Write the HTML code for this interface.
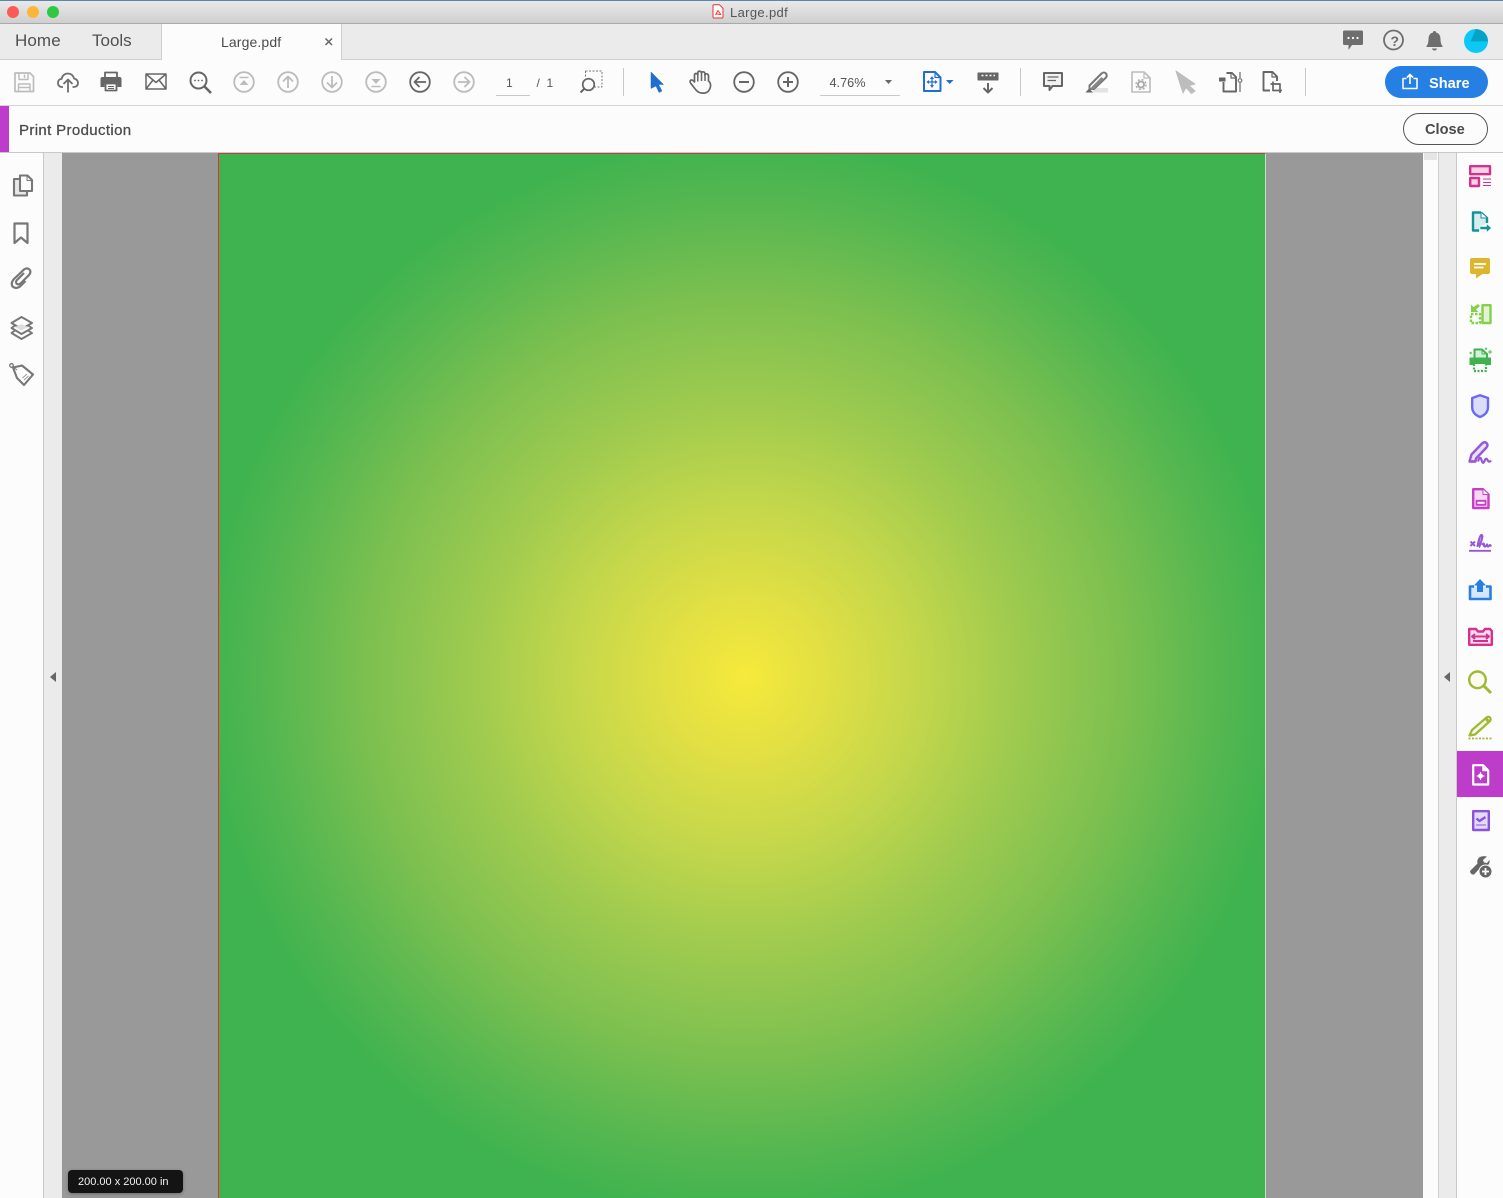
<!DOCTYPE html>
<html><head><meta charset="utf-8">
<style>
html,body{margin:0;padding:0;width:1503px;height:1198px;overflow:hidden;background:#fcfcfc;font-family:"Liberation Sans",sans-serif;}
.a{position:absolute}
svg{position:absolute;overflow:visible;fill:none;stroke-linejoin:round;filter:blur(.25px)}
.t{position:absolute;white-space:nowrap}
</style></head><body>
<!-- title bar -->
<div class="a" style="left:0;top:0;width:1503px;height:1px;background:#5b87a8"></div>
<div class="a" style="left:0;top:1px;width:1503px;height:22px;background:linear-gradient(#e9e9e9,#cfcfcf);border-bottom:1px solid #a9a9a9"></div>
<div class="a" style="left:7px;top:6px;width:12px;height:12px;border-radius:50%;background:#fb5b57"></div>
<div class="a" style="left:27px;top:6px;width:12px;height:12px;border-radius:50%;background:#fdb63a"></div>
<div class="a" style="left:47px;top:6px;width:12px;height:12px;border-radius:50%;background:#2fc844"></div>
<svg style="left:712px;top:4px" width="12" height="15"><path d="M1 1.500Q1 .8 1.700 .8H7.500L11 4.300V13Q11 14 10 14H2Q1 14 1 13Z" stroke="#ee2f2f" fill="#fff"/><path d="M3.500 11 6 6.500 8.800 10.500 3.500 9.800" stroke="#ee2f2f" stroke-width=".9"/></svg>
<div class="t" style="left:730px;top:5px;font-size:13px;color:#555;letter-spacing:.35px">Large.pdf</div>
<!-- tab row -->
<div class="a" style="left:0;top:24px;width:1503px;height:35px;background:#ebebeb;border-bottom:1px solid #cfcfcf"></div>
<div class="a" style="left:161px;top:24px;width:181px;height:36px;background:#fcfcfc;border-left:1px solid #cfcfcf;border-right:1px solid #cfcfcf;box-sizing:border-box"></div>
<div class="t" style="left:15px;top:31px;font-size:17px;color:#505050;letter-spacing:.1px">Home</div>
<div class="t" style="left:92px;top:31px;font-size:17px;color:#505050">Tools</div>
<div class="t" style="left:221px;top:34px;font-size:14px;color:#4b4b4b;letter-spacing:.12px">Large.pdf</div>
<svg style="left:325px;top:38px" width="8" height="8"><path d="M.5 .5 7 7M7 .5 .5 7" stroke="#666" stroke-width="1.500"/></svg>
<!-- tab right icons -->
<svg style="left:1342px;top:30px" width="22" height="22"><path d="M2.500 .5H19.500Q21 .5 21 2V13.500Q21 15 19.500 15H10L6.500 20V15H2.500Q1 15 1 13.500V2Q1 .5 2.500 .5Z" fill="#6e6e6e"/><circle cx="6.500" cy="8" r="1.100" fill="#fff"/><circle cx="11" cy="8" r="1.100" fill="#fff"/><circle cx="15.500" cy="8" r="1.100" fill="#fff"/></svg>
<svg style="left:1383px;top:29px" width="22" height="22"><circle cx="10.500" cy="11" r="9.500" stroke="#6e6e6e" stroke-width="1.800"/></svg>
<div class="t" style="left:1390.500px;top:33px;font-size:14px;font-weight:bold;color:#6e6e6e">?</div>
<svg style="left:1426px;top:30px" width="18" height="21"><path d="M8.500 1Q10 1 10 2.500Q14.500 3.500 14.500 9Q14.500 14 16.500 16V17H.5V16Q2.500 14 2.500 9Q2.500 3.500 7 2.500Q7 1 8.500 1Z" fill="#6e6e6e"/><path d="M6 18.500H11Q10.500 20.500 8.500 20.500T6 18.500Z" fill="#6e6e6e"/></svg>
<div class="a" style="left:1464px;top:29px;width:24px;height:24px;border-radius:50%;background:#0cc8f7"></div>
<svg style="left:1464px;top:29px" width="24" height="24"><path d="M12 0 6.500 12.500H24Q23.500 2 12 0Z" fill="#07a3c6"/></svg>
<!-- toolbar -->
<div class="a" style="left:0;top:60px;width:1503px;height:45px;background:#fcfcfc;border-bottom:1px solid #d4d4d4"></div>
<svg style="left:14px;top:72px" width="20" height="20"><path d="M1 1H16L19.500 4.500V19.500H1Z" stroke="#bcbcbc" stroke-width="1.700"/><path d="M5 1V7.500H14V1M10.500 2.500V6M4.500 19V12H16V19M4.500 15.500H16" stroke="#bcbcbc" stroke-width="1.400"/></svg>
<svg style="left:57px;top:71px" width="22" height="22"><path d="M6 16H4.500Q.8 15.500 1 11.500Q1.300 8 4.500 8Q6 2.500 11 2.500Q16 2.800 17 7.500Q21 8.500 21 12Q21 15.500 17 16H15.500" stroke="#6e6e6e" stroke-width="1.800"/><path d="M11 21.500V9M6.500 13 11 8.500 15.500 13" stroke="#6e6e6e" stroke-width="1.800"/></svg>
<svg style="left:100px;top:71px" width="22" height="21"><path d="M5 7V1.500H17V7" stroke="#666" stroke-width="1.800"/><path d="M2.500 6H19.500Q21.500 6 21.500 8V16H17.500V12.500H4.500V16H.5V8Q.5 6 2.500 6Z" fill="#666"/><path d="M5.500 12.500H16.500V19.500H5.500Z" stroke="#666" stroke-width="1.800"/><path d="M8 15.500H14M8 17.500H14" stroke="#666"/></svg>
<svg style="left:145px;top:73px" width="22" height="17"><path d="M1 1H21V16H1ZM1 1 11 9.500 21 1M1 16 8 7M21 16 14 7" stroke="#666" stroke-width="1.500"/></svg>
<svg style="left:189px;top:71px" width="24" height="24"><circle cx="9.500" cy="9.500" r="8" stroke="#666" stroke-width="2"/><path d="M15 15 22 22" stroke="#666" stroke-width="2.600"/><circle cx="6" cy="9.500" r=".9" fill="#666"/><circle cx="9.500" cy="9.500" r=".9" fill="#666"/><circle cx="13" cy="9.500" r=".9" fill="#666"/></svg>
<svg style="left:233px;top:71px" width="22" height="22"><circle cx="11" cy="11" r="9.800" stroke="#bcbcbc" stroke-width="1.800"/><path d="M6.500 6.500H15.500" stroke="#bcbcbc" stroke-width="1.500"/><path d="M11 9 15.500 14H6.500Z" fill="#bcbcbc"/></svg>
<svg style="left:277px;top:71px" width="22" height="22"><circle cx="11" cy="11" r="9.800" stroke="#bcbcbc" stroke-width="1.800"/><path d="M11 17V5.500M6 10.500 11 5.500 16 10.500" stroke="#bcbcbc" stroke-width="1.800"/></svg>
<svg style="left:321px;top:71px" width="22" height="22"><circle cx="11" cy="11" r="9.800" stroke="#bcbcbc" stroke-width="1.800"/><path d="M11 5V16.500M6 11.500 11 16.500 16 11.500" stroke="#bcbcbc" stroke-width="1.800"/></svg>
<svg style="left:365px;top:71px" width="22" height="22"><circle cx="11" cy="11" r="9.800" stroke="#bcbcbc" stroke-width="1.800"/><path d="M6.500 15.500H15.500" stroke="#bcbcbc" stroke-width="1.500"/><path d="M11 13 15.500 8H6.500Z" fill="#bcbcbc"/></svg>
<svg style="left:409px;top:71px" width="22" height="22"><circle cx="11" cy="11" r="9.800" stroke="#666" stroke-width="1.800"/><path d="M17 11H5.500M10.500 6 5.500 11 10.500 16" stroke="#666" stroke-width="1.800"/></svg>
<svg style="left:453px;top:71px" width="22" height="22"><circle cx="11" cy="11" r="9.800" stroke="#bcbcbc" stroke-width="1.800"/><path d="M5 11H16.500M11.500 6 16.500 11 11.500 16" stroke="#bcbcbc" stroke-width="1.800"/></svg>
<div class="t" style="left:506px;top:76px;font-size:12px;color:#555">1</div>
<div class="a" style="left:496px;top:95px;width:34px;height:1px;background:#c8c8c8"></div>
<div class="t" style="left:536.500px;top:76px;font-size:12px;color:#555">/&nbsp;&nbsp;1</div>
<svg style="left:579px;top:70px" width="24" height="24"><path d="M6.500 1H23V17H12" stroke="#777" stroke-dasharray="2 1.500"/><path d="M6.500 1V8" stroke="#777" stroke-dasharray="2 1.500"/><circle cx="9.500" cy="14.500" r="5.800" stroke="#666" stroke-width="1.700" fill="#fcfcfc"/><path d="M5 19 1.500 22.500" stroke="#666" stroke-width="2"/></svg>
<div class="a" style="left:623px;top:68px;width:1px;height:28px;background:#c8c8c8"></div>
<svg style="left:650px;top:71px" width="15" height="22"><path d="M1 1 13.500 13.500H8.500L12 20 9 21.500 6 15 1 17.500Z" fill="#1f6fd0" stroke="#1f6fd0" stroke-width=".5"/></svg>
<svg style="left:689px;top:70px" width="23" height="24"><path d="M7 20 1.500 13Q.5 11 2 10Q3.500 9.500 5.500 12V5Q5.500 3.500 7 3.500T8.800 5V3Q8.800 1.200 10.500 1.200T12.500 3V3Q12.500 1.800 14 1.800T16 3.500V5Q16 3.800 17.500 3.800T19.500 5.500V11Q22 13 21.500 16.500Q20.500 22 16 23Q10 23.800 7 20Z" stroke="#666" stroke-width="1.700"/><path d="M8.800 4V11.500M12.500 3V11M16 4V11" stroke="#666" stroke-width="1.500"/></svg>
<svg style="left:733px;top:71px" width="22" height="22"><circle cx="11" cy="11" r="9.800" stroke="#666" stroke-width="1.800"/><path d="M6 11H16" stroke="#666" stroke-width="2"/></svg>
<svg style="left:777px;top:71px" width="22" height="22"><circle cx="11" cy="11" r="9.800" stroke="#666" stroke-width="1.800"/><path d="M6 11H16M11 6V16" stroke="#666" stroke-width="2"/></svg>
<div class="t" style="left:829.500px;top:76px;font-size:12.700px;color:#555">4.76%</div>
<div class="a" style="left:820px;top:95px;width:80px;height:1px;background:#c8c8c8"></div>
<svg style="left:885px;top:80px" width="8" height="5"><path d="M0 0H7L3.500 4Z" fill="#666"/></svg>
<svg style="left:923px;top:71px" width="19" height="21"><path d="M1 1H12L17.500 6.500V20H1Z" stroke="#1f6fd0" stroke-width="2"/><path d="M12 1V6.500H17.500" stroke="#1f6fd0" stroke-width="1.200"/><path d="M9 6V16M4 11H14" stroke="#1f6fd0" stroke-width="1.200"/><path d="M9 5 11 8H7ZM9 17 7 14H11ZM3.500 11 6 9V13ZM14.500 11 12 9V13Z" fill="#1f6fd0"/></svg>
<svg style="left:946px;top:80px" width="8" height="5"><path d="M0 0H7.500L3.700 4Z" fill="#1f6fd0"/></svg>
<svg style="left:977px;top:72px" width="22" height="22"><path d="M1 1H21V8H1Z" fill="#666" stroke="#666"/><path d="M4.500 3.500H6.500M8.500 3.500H10.500M12.500 3.500H14.500M16.500 3.500H18" stroke="#fff" stroke-width="1.500"/><path d="M11 11V20.500M6.500 16 11 20.500 15.500 16" stroke="#666" stroke-width="2"/></svg>
<div class="a" style="left:1020px;top:68px;width:1px;height:28px;background:#c8c8c8"></div>
<svg style="left:1043px;top:72px" width="20" height="21"><path d="M1 1H19V14H9.500L6.500 18V14H1Z" stroke="#666" stroke-width="2" fill="#f2f2f2"/><path d="M4.500 5H15.500M4.500 8.500H13" stroke="#666" stroke-width="1.200"/></svg>
<svg style="left:1085px;top:71px" width="24" height="22"><path d="M7 21.500H23V17H10Z" fill="#e3e3e3"/><path d="M.5 21.500 4 17.500 8 21.500Z" fill="#666"/><path d="M4.500 14.500 16.500 2.500Q19 .5 21 2.500Q22.500 4.500 21 6.500L9 18 4.500 18Z" stroke="#777" stroke-width="2"/><path d="M5 18 7.500 15 16.500 6 18.500 8 9 18Z" fill="#888"/></svg>
<svg style="left:1131px;top:71px" width="20" height="22"><path d="M1 1H13L19 7V21H1Z" stroke="#bcbcbc" stroke-width="1.600"/><path d="M13 1V7H19" stroke="#bcbcbc" stroke-width="1.200"/><circle cx="10" cy="13.500" r="3" stroke="#aaa" stroke-width="2"/><circle cx="10" cy="13.500" r="5" stroke="#aaa" stroke-dasharray="2 2" stroke-width="1.300"/></svg>
<svg style="left:1175px;top:70px" width="22" height="25"><path d="M1 1 20 14 14 15.500 20 21 16.500 23.500 11 17.500 8 23Z" fill="#bdbdbd" stroke="#bdbdbd"/></svg>
<svg style="left:1218px;top:71px" width="24" height="22"><path d="M8.500 2H14L18 6V20.500H5.500V11" stroke="#666" stroke-width="1.900"/><path d="M1 6.500H7.500V10.500H1Z" fill="#666"/><path d="M13 2V7H18" stroke="#666" stroke-width="1.200"/><path d="M22 1V7M22 12V21" stroke="#888" stroke-width="1.500"/><circle cx="22" cy="9.500" r="1.800" stroke="#777" stroke-width="1.200"/></svg>
<svg style="left:1262px;top:71px" width="23" height="24"><path d="M8 19.500H1.500V1H10.500L15 5.500V10" stroke="#666" stroke-width="1.900"/><path d="M10 1V6H15" stroke="#666" stroke-width="1.200"/><path d="M11 10.500V19.500H20M8.500 13H18V22" stroke="#666" stroke-width="1.700"/></svg>
<div class="a" style="left:1305px;top:68px;width:1px;height:28px;background:#c8c8c8"></div>
<div class="a" style="left:1385px;top:66px;width:103px;height:32px;border-radius:16px;background:#2680e3"></div>
<svg style="left:1402px;top:73px" width="16" height="17"><path d="M4.500 5.500H1V15.500H15V5.500H11.500" stroke="#fff" stroke-width="1.500"/><path d="M8 11V1.500M5 4.500 8 1.500 11 4.500" stroke="#fff" stroke-width="1.600"/></svg>
<div class="t" style="left:1429px;top:76px;font-size:14.600px;font-weight:bold;color:#fff">Share</div>
<!-- Print production bar -->
<div class="a" style="left:0;top:106px;width:1503px;height:46px;background:#fcfcfc;border-bottom:1px solid #c9c9c9"></div>
<div class="a" style="left:0;top:106px;width:9px;height:46px;background:#bd3cc9"></div>
<div class="t" style="left:19px;top:121.500px;font-size:15px;color:#4b4b4b;letter-spacing:.36px;-webkit-text-stroke:.25px #4b4b4b">Print Production</div>
<div class="a" style="left:1403px;top:113px;width:85px;height:32px;border:1px solid #555;border-radius:16px;box-sizing:border-box;background:#fcfcfc"></div>
<div class="t" style="left:1425px;top:122px;font-size:14.600px;font-weight:bold;color:#4b4b4b">Close</div>
<!-- main -->
<div class="a" style="left:0;top:153px;width:43px;height:1045px;background:#fcfcfc;border-right:1px solid #c9c9c9"></div>
<div class="a" style="left:44px;top:153px;width:18px;height:1045px;background:#ebebeb"></div>
<svg style="left:50px;top:672px" width="6" height="10"><path d="M6 0V10L0 5Z" fill="#666"/></svg>
<div class="a" style="left:62px;top:153px;width:1361px;height:1045px;background:#999"></div>
<!-- page -->
<div class="a" style="left:218px;top:153px;width:1048px;height:1045px;box-sizing:border-box;border-left:1.500px solid #ee2a2f;border-right:1.500px solid #c8e0c8;border-top:1px solid #c2403f;background:radial-gradient(circle 538px at 526px 523px,#f6ea3b 0%,#e3e043 14%,#c4d74b 32%,#a0cb4f 50%,#7dc050 70%,#56b750 88%,#3fb34f 100%);background-color:#3fb34f"></div>
<!-- scrollbar -->
<div class="a" style="left:1423px;top:153px;width:15px;height:1045px;background:#fcfcfc;border-right:1px solid #d0d0d0"></div>
<div class="a" style="left:1424px;top:153px;width:13px;height:7px;background:#e5e5e5"></div>
<div class="a" style="left:1439px;top:153px;width:17px;height:1045px;background:#ebebeb;border-right:1px solid #c9c9c9"></div>
<svg style="left:1444px;top:672px" width="6" height="10"><path d="M6 0V10L0 5Z" fill="#666"/></svg>
<div class="a" style="left:1457px;top:153px;width:46px;height:1045px;background:#fcfcfc"></div>
<!-- left icons -->
<svg style="left:12px;top:174px" width="22" height="24"><path d="M8 5H2V21.500H15V17" stroke="#777" stroke-width="2.100" fill="#e8e8e8"/><path d="M8 1.500H15.500L20 6V17H8Z" stroke="#777" stroke-width="2.100" fill="#fcfcfc"/><path d="M15 2V6.500H20" stroke="#777"/></svg>
<svg style="left:13px;top:222px" width="16" height="23"><path d="M1.500 1.500H14.500V21L8 15.500 1.500 21Z" stroke="#777" stroke-width="2.200"/></svg>
<svg style="left:10px;top:267px" width="22" height="23"><path d="M14 6 7 13Q5 15.500 7 17Q9 18 11 16L19 8Q21.500 5 19.500 2.500Q17 .2 14 2.500L4 12Q.5 16 2.500 19.500Q6 22.500 10 19.500L15.500 14" stroke="#777" stroke-width="2.200"/></svg>
<svg style="left:11px;top:316px" width="22" height="24"><path d="M10.500 1 21 7 10.500 13 .5 7Z" stroke="#777" stroke-width="1.900"/><path d="M4 9.500 .5 12 10.500 18 21 12 17 9.500M4 14.500 .5 17 10.500 23 21 17 17 14.500" stroke="#777" stroke-width="1.900"/><path d="M4 11 10.500 14.500 17 11 10.500 8Z" fill="#ddd"/></svg>
<svg style="left:9px;top:362px" width="25" height="25"><path d="M4 5.500 13 3.500 24 12.500 15 23 8 16Z" stroke="#777" stroke-width="2.100"/><circle cx="2.500" cy="3.500" r="1.800" stroke="#777" stroke-width="1.300"/><path d="M3.500 4.500 8 8" stroke="#777"/><path d="M13.500 16 18 12M15 18 19.500 14" stroke="#999"/></svg>
<!-- right icons -->
<svg style="left:1469px;top:165px" width="23" height="22"><path d="M1.200 1.200H21V9.200H1.200Z" fill="#f5d3e5" stroke="#d5308e" stroke-width="2.400"/><path d="M1.200 13H10V21H1.200Z" fill="#f5d3e5" stroke="#d5308e" stroke-width="2.400"/><path d="M14 14H22M14 17.500H22M14 20.500H22" stroke="#d5308e" stroke-width="1.100"/></svg>
<svg style="left:1471px;top:210px" width="22" height="24"><path d="M2 2.500H10L16 8V14L9 16V21H2Z" fill="#d4eded"/><path d="M10 2.500H2V20.500H8M10 2.500 16 8V13" stroke="#14919b" stroke-width="2.400"/><path d="M10 2.500V8H16" stroke="#14919b" fill="#fff"/><path d="M9 16.500H15.500V13.500L20.500 18 15.500 22.500V19.500H9Z" fill="#14919b" stroke="#fcfcfc" stroke-width=".6"/></svg>
<svg style="left:1470px;top:258px" width="20" height="21"><path d="M1.500 0H18Q20 0 20 2V14Q20 16 18 16H12.500L6 20.500V16H2Q0 16 0 14V2Q0 0 2 0Z" fill="#ddb62f"/><path d="M4 6H16M4 9.500H13.500" stroke="#fff" stroke-width="1.800"/></svg>
<svg style="left:1470px;top:304px" width="22" height="20"><path d="M12.500 1.200H20.500V19H12.500Z" fill="#e3f2d4" stroke="#85cf4b" stroke-width="2.400"/><path d="M1 10H10V19H1Z" stroke="#85cf4b" stroke-width="2.400" stroke-dasharray="2.500 1.500"/><path d="M1 .5V8H8.500L6 5.500 10 2 8 0 3.500 3Z" fill="#85cf4b"/></svg>
<svg style="left:1469px;top:347px" width="24" height="26"><path d="M5.500 11V2.500H13L18 7V11" stroke="#3fb34f" stroke-width="2" fill="#d6efd8"/><path d="M13 2.500V7H18" stroke="#3fb34f"/><path d="M.5 10.500H22V18H.5Z" fill="#3fb34f"/><path d="M5 17V24H17V17" stroke="#3fb34f" stroke-width="2.200" stroke-dasharray="2 1.500" fill="#fcfcfc"/><path d="M17 .5V3M15.700 1.700H18.300M21 3V7M19 5H23M.5 6H3M1.700 4.700V7.300" stroke="#63c46f" stroke-width="1.200"/></svg>
<svg style="left:1471px;top:394px" width="19" height="24"><path d="M1.200 4 9 1.200 17 4V13Q17 20 9 23Q1.200 20 1.200 13Z" fill="#dcdcfb" stroke="#6a6af0" stroke-width="2.400"/></svg>
<svg style="left:1468px;top:441px" width="24" height="23"><path d="M1.500 20.500 3.500 13.500 14 2.500Q16.500 .2 18.500 2Q20.500 4 18.500 6.500L8 17.500 7.500 20.500Z" fill="#ece0f8" stroke="#9558d8" stroke-width="2.400"/><path d="M1 20.500H8M10 20.500Q12 14 13.500 19T16.500 20 19.500 19 23 19.500" stroke="#9558d8" stroke-width="2.200"/></svg>
<svg style="left:1472px;top:488px" width="18" height="21"><path d="M1.200 1.200H11L16.500 6.500V20H1.200Z" fill="#f4d8f4" stroke="#c83fc7" stroke-width="2.400"/><path d="M11 1.200V6.500H16.500" fill="#fff" stroke="#c83fc7"/><path d="M4.500 12.800H13.500V16.800H4.500Z" fill="#fff" stroke="#c83fc7" stroke-width="1.800"/></svg>
<svg style="left:1469px;top:534px" width="23" height="20"><path d="M1.500 7.500 6 12M6 7.500 1.500 12" stroke="#9558d8" stroke-width="2"/><path d="M8.500 13Q10.500 1 12.500 1Q14.500 1.500 11.500 9 10.500 13 10 13M13 11Q15 8 15 11.500 16 14 18 10.500 18 13.500 20 12 21 10 22 12.500" stroke="#9558d8" stroke-width="2.200"/><path d="M0 16.800H22" stroke="#9558d8" stroke-width="1.800"/></svg>
<svg style="left:1468px;top:578px" width="24" height="23"><path d="M1 8.500H23V21.500H1Z" fill="#d5e8fb"/><path d="M6 8.500H2V21H22.500V8.500H18" stroke="#2680e3" stroke-width="2.600"/><path d="M12 1 18 7.500H15V14H9V7.500H6Z" fill="#2680e3"/></svg>
<svg style="left:1468px;top:627px" width="25" height="19"><path d="M1.200 2H8L10 4.500H15L17 2H22L23.800 4V17.800H1.200Z" fill="#f9dfed" stroke="#d5308e" stroke-width="2.400"/><path d="M5 9.500H20M7 12 4 9.500 7 7M18 12 21 9.500 18 7M5 14H20" stroke="#d5308e" stroke-width="1.900"/></svg>
<svg style="left:1468px;top:670px" width="24" height="25"><circle cx="9.500" cy="9.800" r="8.300" stroke="#9fb836" stroke-width="2.400" fill="#fbfbef"/><path d="M15.500 15.500 23 23" stroke="#9fb836" stroke-width="3"/></svg>
<svg style="left:1468px;top:715px" width="24" height="25"><path d="M1.500 20.500 4 15 18.500 2.500Q20.500 1 22 2.500Q23.500 4.500 21.500 6.500L7 19.500Z" stroke="#9fb836" stroke-width="2.200" fill="#f5f7e4"/><path d="M18 3.500 21 7" stroke="#9fb836" stroke-width="3"/><path d="M.5 23.500H24" stroke="#9fb836" stroke-width="1.700" stroke-dasharray="2 1.500"/></svg>
<div class="a" style="left:1457px;top:751px;width:46px;height:46px;background:#bd3cc9"></div>
<svg style="left:1472px;top:764px" width="18" height="22"><path d="M1.200 1.200H11L16.200 6.500V20.500H1.200Z" stroke="#fff" stroke-width="2.200"/><path d="M11 1.200V6.500H16.200" stroke="#fff" stroke-width="1.500" fill="#fff"/><path d="M8.500 8V16M4.500 12H12.500" stroke="#fff" stroke-width="1.100"/><circle cx="8.500" cy="12" r="2.500" fill="#fff"/></svg>
<svg style="left:1472px;top:810px" width="18" height="21"><path d="M1.200 1.200H16.800V20H1.200Z" fill="#e6daf9" stroke="#8a55de" stroke-width="2.400"/><path d="M4.500 8.500 7.500 11 13.500 7" stroke="#8a55de" stroke-width="2.400"/><path d="M4 15H14" stroke="#8a55de"/></svg>
<svg style="left:1469px;top:855px" width="24" height="24"><path d="M1 16 8.500 8.500Q7.500 4 11 2Q14 .5 18 1.500L14 5 15 7.500 18 8 20.500 5Q21 8 19.500 9.500L15 11.500H12.500L5 19.500Q1.500 20 1 16Z" fill="#666"/><circle cx="16.500" cy="16.500" r="6.500" fill="#666" stroke="#fcfcfc"/><path d="M13 16.500H20M16.500 13V20" stroke="#fff" stroke-width="1.800"/></svg>
<!-- tooltip -->
<div class="a" style="left:68px;top:1170px;width:115px;height:23px;border-radius:4px;background:#141414;box-shadow:0 1px 3px rgba(0,0,0,.3)"></div>
<div class="t" style="left:78px;top:1176px;font-size:11px;color:#f2f2f2">200.00 x 200.00 in</div>
</body></html>
